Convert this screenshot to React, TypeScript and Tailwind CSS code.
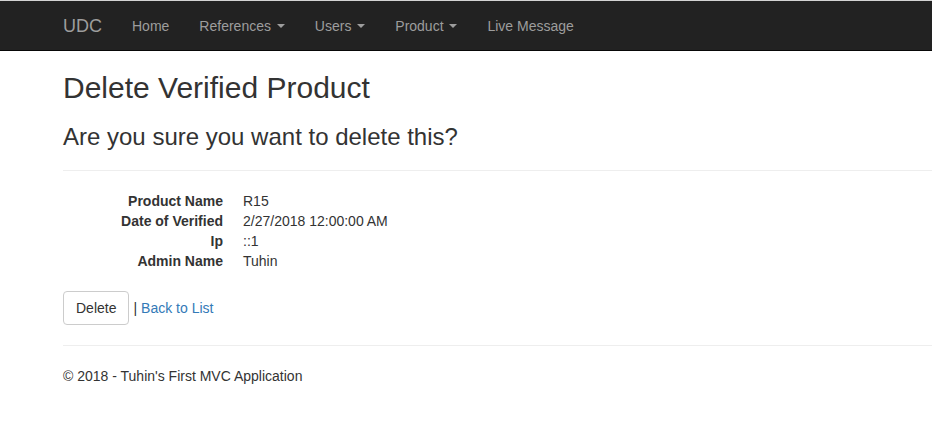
import React from "react";

const Caret = () => (
  <span className="ml-[2px] inline-block h-0 w-0 align-middle border-t-[4px] border-x-[4px] border-x-transparent border-t-[#9d9d9d]" />
);

export default function App() {
  const font = { fontFamily: '"Liberation Sans", Arial, sans-serif' };
  const rows: [string, string][] = [
    ["Product Name", "R15"],
    ["Date of Verified", "2/27/2018 12:00:00 AM"],
    ["Ip", "::1"],
    ["Admin Name", "Tuhin"],
  ];
  return (
    <div className="min-h-[430px] w-full overflow-hidden bg-white text-[14px] leading-[20px] text-[#333]" style={font}>
      <div className="h-[1px] bg-[#d4d4d4]" />
      <nav className="flex h-[50px] items-stretch border-b border-[#080808] bg-[#222] pl-[48px]">
        <a className="flex items-center px-[15px] text-[18px] leading-[20px] text-[#9d9d9d]">UDC</a>
        <ul className="flex items-stretch">
          <li className="flex items-center px-[15px] text-[#9d9d9d]">Home</li>
          <li className="flex items-center px-[15px] text-[#9d9d9d]">
            References&nbsp;<Caret />
          </li>
          <li className="flex items-center px-[15px] text-[#9d9d9d]">
            Users&nbsp;<Caret />
          </li>
          <li className="flex items-center px-[15px] text-[#9d9d9d]">
            Product&nbsp;<Caret />
          </li>
          <li className="flex items-center px-[15px] text-[#9d9d9d]">Live Message</li>
        </ul>
      </nav>
      <div className="pl-[63px]">
        <h2 className="mt-[20px] mb-[10px] text-[30px] leading-[33px] font-normal">Delete Verified Product</h2>
        <h3 className="mt-[20px] mb-[10px] text-[24px] leading-[26px] font-normal">Are you sure you want to delete this?</h3>
        <div>
          <hr className="mt-[20px] mb-[20px] border-0 border-t border-[#eee]" />
          <dl className="mb-[20px]">
            {rows.map(([k, v]) => (
              <div key={k} className="flex">
                <dt className="w-[160px] shrink-0 text-right font-bold">{k}</dt>
                <dd className="ml-[20px]">{v}</dd>
              </div>
            ))}
          </dl>
          <div className="flex items-center">
            <button className="h-[34px] rounded-[4px] border border-[#ccc] bg-white px-[12px] text-[14px] text-[#333]">
              Delete
            </button>
            <span className="ml-[4px]">|</span>
            <a className="ml-[4px] text-[#337ab7]">Back to List</a>
          </div>
        </div>
        <hr className="mt-[20px] mb-[20px] border-0 border-t border-[#eee]" />
        <footer>
          <p>© 2018 - Tuhin's First MVC Application</p>
        </footer>
      </div>
    </div>
  );
}
